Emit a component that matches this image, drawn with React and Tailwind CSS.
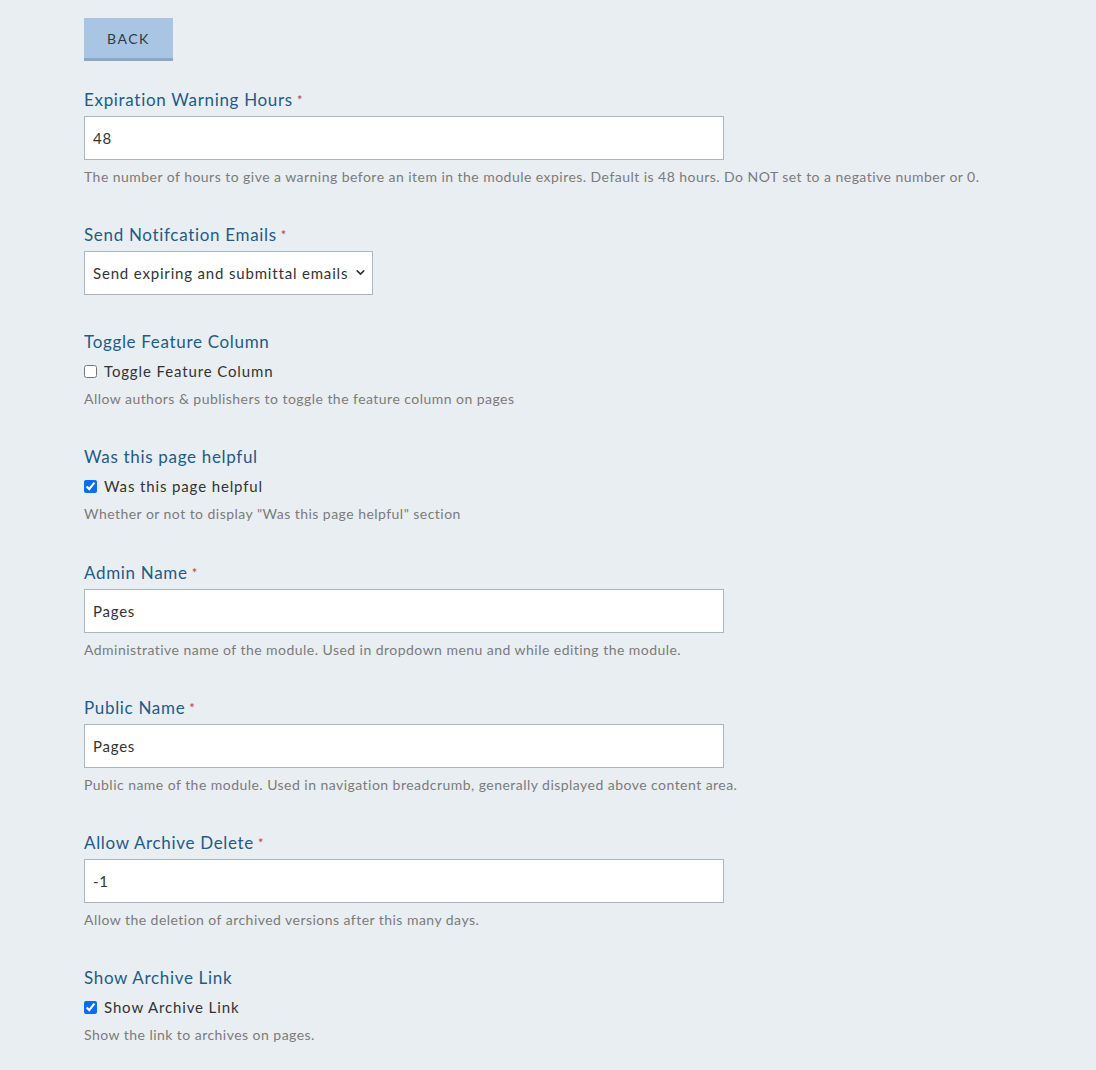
import { ChevronDown } from 'lucide-react';

const labelCls = 'block text-[17px] leading-6 tracking-[0.04em] text-[#1e5b87] mb-1';
const helpCls = 'text-[14px] leading-5 tracking-[0.033em] text-[#7b7b7b] mt-[7px]';
const inputCls =
  'block w-[640px] h-[44px] px-2 bg-white border border-[#aab6c4] text-[15px] tracking-[0.05em] text-[#333] outline-none';

function Req() {
  return <span className="text-[#b5463d] text-[13px] align-top ml-1">*</span>;
}

function TextField({ label, value, help }) {
  return (
    <div className="mb-9">
      <label className={labelCls}>
        {label}
        <Req />
      </label>
      <input className={inputCls} defaultValue={value} />
      <p className={helpCls}>{help}</p>
    </div>
  );
}

function CheckField({ label, checked, help, last }) {
  return (
    <div className={last ? 'mb-[37px]' : 'mb-9'}>
      <div className="text-[17px] leading-6 tracking-[0.04em] text-[#1e5b87] mb-[5px]">{label}</div>
      <label className="flex items-center gap-[7px] text-[15px] leading-6 tracking-[0.058em] text-[#333]">
        <input type="checkbox" defaultChecked={checked} className="w-[13px] h-[13px] m-0 accent-[#0b6cf0]" />
        {label}
      </label>
      <p className="text-[14px] leading-5 tracking-[0.033em] text-[#7b7b7b] mt-[6px]">{help}</p>
    </div>
  );
}

export default function App() {
  return (
    <div className="min-h-screen bg-[#e9eef2] pl-[84px] pt-[18px] pb-6" style={{ fontFamily: '"Lato", "Liberation Sans", sans-serif' }}>
      <button className="w-[89px] h-[43px] bg-[#a8c6e4] border-b-[3px] border-[#8da8c3] text-[14px] tracking-[1.5px] text-[#2b3a4a] uppercase mb-[27px]">
        Back
      </button>

      <TextField
        label="Expiration Warning Hours"
        value="48"
        help="The number of hours to give a warning before an item in the module expires. Default is 48 hours. Do NOT set to a negative number or 0."
      />

      <div className="mb-[35px]">
        <label className={labelCls}>
          Send Notifcation Emails
          <Req />
        </label>
        <div className="relative w-[289px]">
          <select className="block w-full h-[44px] pl-2 pr-[16px] appearance-none bg-white border border-[#aab6c4] text-[15px] tracking-[0.055em] text-[#333] outline-none">
            <option>Send expiring and submittal emails</option>
          </select>
          <ChevronDown size={13} strokeWidth={3} className="absolute right-[6px] top-[15px] text-[#333] pointer-events-none" />
        </div>
      </div>

      <CheckField
        label="Toggle Feature Column"
        checked={false}
        help="Allow authors & publishers to toggle the feature column on pages"
      />
      <CheckField
        label="Was this page helpful"
        checked
        last
        help={'Whether or not to display "Was this page helpful" section'}
      />

      <TextField
        label="Admin Name"
        value="Pages"
        help="Administrative name of the module. Used in dropdown menu and while editing the module."
      />
      <TextField
        label="Public Name"
        value="Pages"
        help="Public name of the module. Used in navigation breadcrumb, generally displayed above content area."
      />
      <TextField
        label="Allow Archive Delete"
        value="-1"
        help="Allow the deletion of archived versions after this many days."
      />

      <CheckField label="Show Archive Link" checked help="Show the link to archives on pages." />
    </div>
  );
}
